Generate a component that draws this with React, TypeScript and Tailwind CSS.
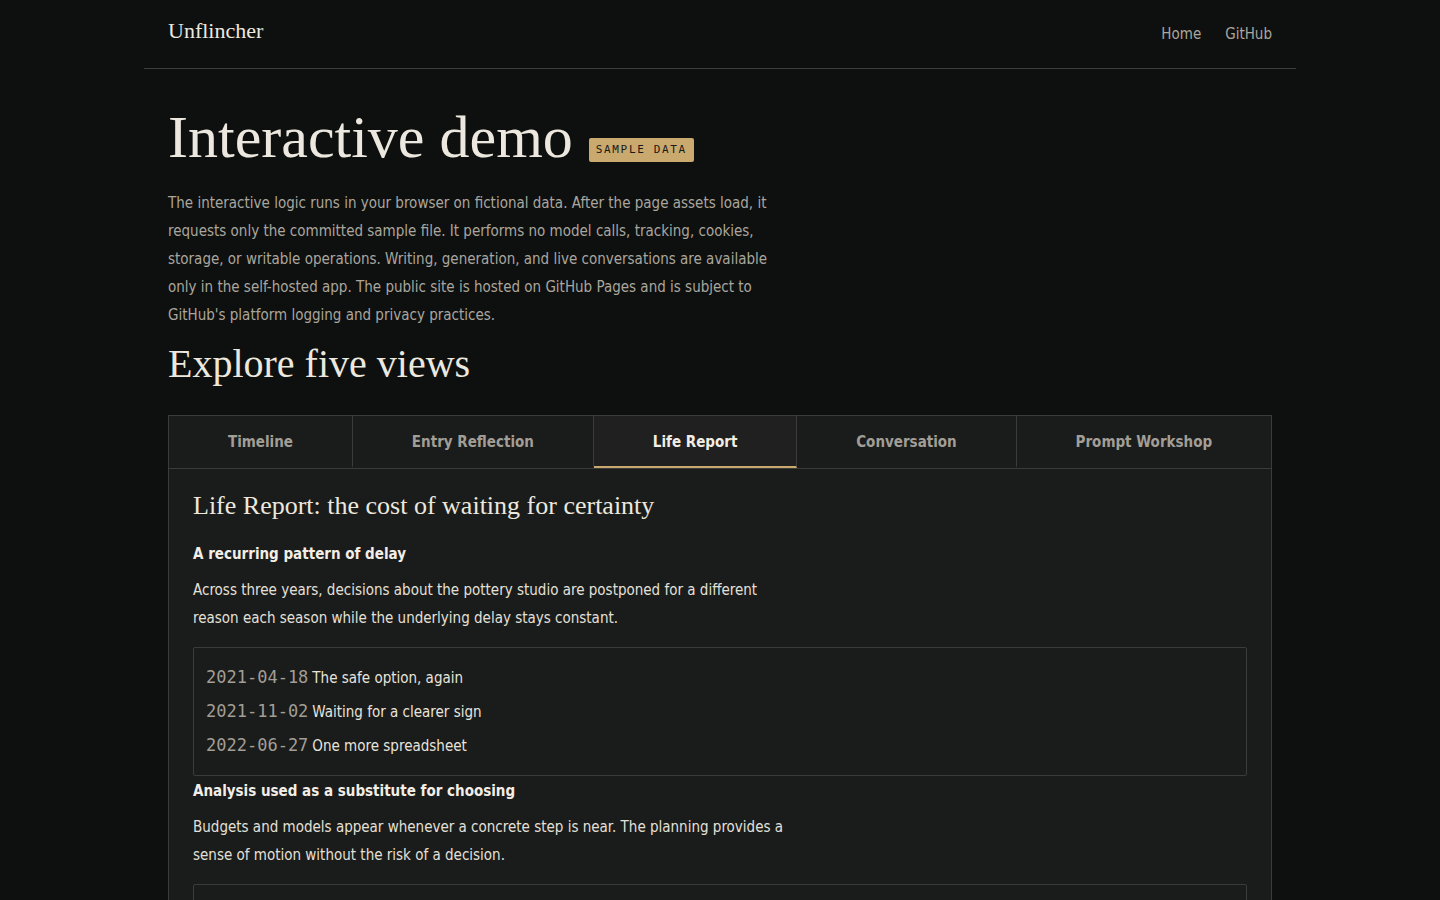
const sans = "font-[family-name:'DejaVu_Sans_Condensed','DejaVu_Sans',sans-serif]";
const mono = "font-[family-name:'DejaVu_Sans_Mono',monospace]";
const serif = "font-['Liberation_Serif',serif]";

const tabs = ["Timeline", "Entry Reflection", "Life Report", "Conversation", "Prompt Workshop"];

const sections = [
  {
    title: "A recurring pattern of delay",
    body: "Across three years, decisions about the pottery studio are postponed for a different reason each season while the underlying delay stays constant.",
    entries: [
      ["2021-04-18", "The safe option, again"],
      ["2021-11-02", "Waiting for a clearer sign"],
      ["2022-06-27", "One more spreadsheet"],
    ],
  },
  {
    title: "Analysis used as a substitute for choosing",
    body: "Budgets and models appear whenever a concrete step is near. The planning provides a sense of motion without the risk of a decision.",
    entries: [
      ["2021-08-09", "Three versions of the same budget"],
      ["2022-02-14", "A model for every scenario"],
      ["2023-01-30", "Research as a place to wait"],
    ],
  },
];

export default function App() {
  return (
    <div className={`min-h-screen bg-[#0e100f] text-[#ece8df] ${sans}`}>
      <div className="mx-auto w-[1152px]">
        {/* Top bar */}
        <header className="flex h-[69px] items-center justify-between border-b border-[#3d3d3a] px-6">
          <a className={`mb-2 ${serif} text-[22px] text-[#ece8df]`}>Unflincher</a>
          <nav className="flex items-center gap-6 text-[15px] text-[#aaa69e]">
            <a>Home</a>
            <a>GitHub</a>
          </nav>
        </header>

        <main className="px-6">
          <div className="mt-[35px] flex items-end gap-4">
            <h1 className={`${serif} text-[60px] leading-[66px] text-[#ece8df]`}>Interactive demo</h1>
            <span className={`mb-2 rounded-[2px] bg-[#c9a96e] px-[7px] py-[5px] ${mono} text-[11px] leading-[14px] tracking-[0.15em] text-[#1a1a18]`}>
              SAMPLE DATA
            </span>
          </div>

          <p className="mt-[19px] max-w-[612px] text-[15px] leading-[28px] text-[#aaa69e]">
            The interactive logic runs in your browser on fictional data. After the page assets load, it requests only
            the committed sample file. It performs no model calls, tracking, cookies, storage, or writable operations.
            Writing, generation, and live conversations are available only in the self-hosted app. The public site is
            hosted on GitHub Pages and is subject to GitHub's platform logging and privacy practices.
          </p>

          <h2 className={`mt-[11px] ${serif} text-[40px] leading-[48px] text-[#ece8df]`}>Explore five views</h2>

          <div className="mt-[27px] border border-[#3b3b3a] bg-[#1a1b1b]">
            <div className="flex border-b border-[#3b3b3a]">
              {tabs.map((t, i) => (
                <button
                  key={t}
                  className={`flex h-[52px] flex-auto items-center justify-center border-b-2 px-4 pt-[3px] text-[15px] font-bold ${
                    i < tabs.length - 1 ? "border-r border-r-[#3b3b3a]" : ""
                  } ${t === "Life Report" ? "border-b-[#c9a96e] bg-[#1f201f] text-[#f2eee6]" : "border-b-transparent text-[#a29e96]"}`}
                >
                  {t}
                </button>
              ))}
            </div>

            <div className="px-6 pt-5 pb-10">
              <h3 className={`${serif} text-[26px] leading-[34px] text-[#ece8df]`}>
                Life Report: the cost of waiting for certainty
              </h3>

              {sections.map((s, si) => (
                <section key={s.title} className={si === 0 ? "mt-[17px]" : "mt-px"}>
                  <h4 className="text-[15px] font-bold leading-[28px] text-[#f2eee6]">{s.title}</h4>
                  <p className="mt-2 max-w-[600px] text-[15px] leading-[28px] text-[#e4e0d8]">{s.body}</p>
                  <ul className="mt-[15px] rounded-[2px] border border-[#3b3b3a] px-3 pt-3 pb-[13px]">
                    {s.entries.map(([d, label]) => (
                      <li key={d} className="flex h-[34px] items-center gap-1">
                        <span className={`${mono} text-[17px] leading-[34px] text-[#a29e96]`}>{d}</span>
                        <span className="pt-px text-[15px] leading-[34px] text-[#e8e4dc]">{label}</span>
                      </li>
                    ))}
                  </ul>
                </section>
              ))}
            </div>
          </div>
        </main>
      </div>
    </div>
  );
}
